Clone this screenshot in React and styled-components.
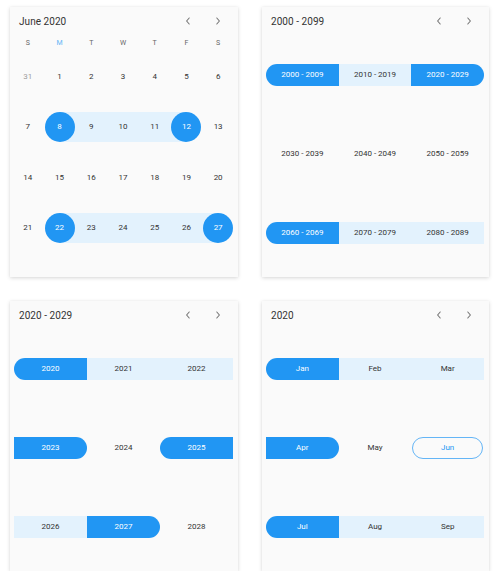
import React from "react";
import styled, { createGlobalStyle, css } from "styled-components";

const BLUE = "#2196F3";
const BAND = "#E3F2FD";

const Global = createGlobalStyle`
  html, body { margin: 0; padding: 0; background: #ffffff; }
  body { font-family: Roboto, "Noto Sans", Arial, sans-serif; }
  * { box-sizing: border-box; }
`;

const Page = styled.div`
  display: grid;
  grid-template-columns: 228px 227px;
  column-gap: 24px;
  row-gap: 24px;
  padding: 7px 0 0 10px;
`;

const Card = styled.div`
  width: 100%;
  height: 270px;
  background: #fafafa;
  box-shadow: 0 1px 4px rgba(0, 0, 0, 0.16), 0 0 1px rgba(0, 0, 0, 0.06);
  overflow: hidden;
  display: flex;
  flex-direction: column;
`;

const Header = styled.div`
  height: 28px;
  display: flex;
  align-items: center;
  padding: 0 5px 0 9px;
  flex: none;
`;

const Title = styled.div`
  flex: 1;
  font-size: 10px;
  color: #333;
  letter-spacing: 0.05px;
`;

const NavButton = styled.div`
  width: 30px;
  height: 20px;
  display: flex;
  align-items: center;
  justify-content: center;
`;

const Chevron = ({ dir }) => (
  <svg width="6" height="8" viewBox="0 0 6 8">
    <path
      d={dir === "left" ? "M4.2 1 L1.6 4 L4.2 7" : "M1.8 1 L4.4 4 L1.8 7"}
      fill="none"
      stroke="#757575"
      strokeWidth="1.1"
      strokeLinecap="round"
      strokeLinejoin="round"
    />
  </svg>
);

const Nav = () => (
  <>
    <NavButton>
      <Chevron dir="left" />
    </NavButton>
    <NavButton>
      <Chevron dir="right" />
    </NavButton>
  </>
);

/* Month view */
const MonthGrid = styled.div`
  margin-left: 2px;
  width: 222px;
  display: grid;
  grid-template-columns: repeat(7, 1fr);
`;

const WeekDay = styled.div`
  height: 16px;
  display: flex;
  align-items: center;
  justify-content: center;
  font-size: 7px;
  color: ${(p) => (p.$accent ? "#64B5F6" : "#666")};
`;

const DayCell = styled.div`
  position: relative;
  height: 50.5px;
  display: flex;
  align-items: center;
  justify-content: center;
  font-size: 8px;
  color: ${(p) => (p.$muted ? "#9e9e9e" : "#333")};
  ${(p) =>
    p.$band &&
    css`
      &::before {
        content: "";
        position: absolute;
        top: 10.25px;
        height: 30px;
        background: ${BAND};
        left: ${p.$band === "start" ? "50%" : "0"};
        right: ${p.$band === "end" ? "50%" : "0"};
      }
    `}
`;

const DayLabel = styled.span`
  position: relative;
  z-index: 1;
  width: 30px;
  height: 30px;
  border-radius: 50%;
  display: flex;
  align-items: center;
  justify-content: center;
  ${(p) =>
    p.$selected &&
    css`
      background: ${BLUE};
      color: #fff;
    `}
`;

const weekDays = ["S", "M", "T", "W", "T", "F", "S"];
const days = [
  [{ d: 31, muted: true }, { d: 1 }, { d: 2 }, { d: 3 }, { d: 4 }, { d: 5 }, { d: 6 }],
  [
    { d: 7 },
    { d: 8, sel: true, band: "start" },
    { d: 9, band: "mid" },
    { d: 10, band: "mid" },
    { d: 11, band: "mid" },
    { d: 12, sel: true, band: "end" },
    { d: 13 },
  ],
  [{ d: 14 }, { d: 15 }, { d: 16 }, { d: 17 }, { d: 18 }, { d: 19 }, { d: 20 }],
  [
    { d: 21 },
    { d: 22, sel: true, band: "start" },
    { d: 23, band: "mid" },
    { d: 24, band: "mid" },
    { d: 25, band: "mid" },
    { d: 26, band: "mid" },
    { d: 27, sel: true, band: "end" },
  ],
];

const MonthCard = () => (
  <Card>
    <Header>
      <Title>June 2020</Title>
      <Nav />
    </Header>
    <MonthGrid>
      {weekDays.map((w, i) => (
        <WeekDay key={i} $accent={i === 1}>
          {w}
        </WeekDay>
      ))}
      {days.flat().map((c, i) => (
        <DayCell key={i} $muted={c.muted} $band={c.band}>
          <DayLabel $selected={c.sel}>{c.d}</DayLabel>
        </DayCell>
      ))}
    </MonthGrid>
  </Card>
);

/* Year / decade / century views */
const YearGrid = styled.div`
  padding: 0 5px 0 4px;
  display: grid;
  grid-template-columns: repeat(3, 1fr);
  grid-auto-rows: 79px;
  align-items: center;
`;

const radius = (r) => {
  if (r === "left") return "11px 0 0 11px";
  if (r === "right") return "0 11px 11px 0";
  if (r === "both") return "11px";
  return "0";
};

const YearCell = styled.div`
  height: 22px;
  display: flex;
  align-items: center;
  justify-content: center;
  font-size: 8px;
  color: #333;
  border-radius: ${(p) => radius(p.$round)};
  ${(p) =>
    p.$kind === "sel" &&
    css`
      background: ${BLUE};
      color: #fff;
    `}
  ${(p) =>
    p.$kind === "range" &&
    css`
      background: ${BAND};
    `}
  ${(p) =>
    p.$kind === "outline" &&
    css`
      border: 1px solid #64b5f6;
      color: ${BLUE};
      margin: 0 1px;
    `}
`;

const YearCard = ({ title, cells }) => (
  <Card>
    <Header>
      <Title>{title}</Title>
      <Nav />
    </Header>
    <YearGrid>
      {cells.map((c, i) => (
        <YearCell key={i} $kind={c.k} $round={c.r}>
          {c.t}
        </YearCell>
      ))}
    </YearGrid>
  </Card>
);

const century = [
  { t: "2000 - 2009", k: "sel", r: "left" },
  { t: "2010 - 2019", k: "range" },
  { t: "2020 - 2029", k: "sel", r: "right" },
  { t: "2030 - 2039" },
  { t: "2040 - 2049" },
  { t: "2050 - 2059" },
  { t: "2060 - 2069", k: "sel", r: "left" },
  { t: "2070 - 2079", k: "range" },
  { t: "2080 - 2089", k: "range" },
];

const decade = [
  { t: "2020", k: "sel", r: "left" },
  { t: "2021", k: "range" },
  { t: "2022", k: "range" },
  { t: "2023", k: "sel", r: "right" },
  { t: "2024" },
  { t: "2025", k: "sel", r: "left" },
  { t: "2026", k: "range" },
  { t: "2027", k: "sel", r: "right" },
  { t: "2028" },
];

const year = [
  { t: "Jan", k: "sel", r: "left" },
  { t: "Feb", k: "range" },
  { t: "Mar", k: "range" },
  { t: "Apr", k: "sel", r: "right" },
  { t: "May" },
  { t: "Jun", k: "outline", r: "both" },
  { t: "Jul", k: "sel", r: "left" },
  { t: "Aug", k: "range" },
  { t: "Sep", k: "range" },
];

export default function App() {
  return (
    <>
      <Global />
      <Page>
        <MonthCard />
        <YearCard title="2000 - 2099" cells={century} />
        <YearCard title="2020 - 2029" cells={decade} />
        <YearCard title="2020" cells={year} />
      </Page>
    </>
  );
}
